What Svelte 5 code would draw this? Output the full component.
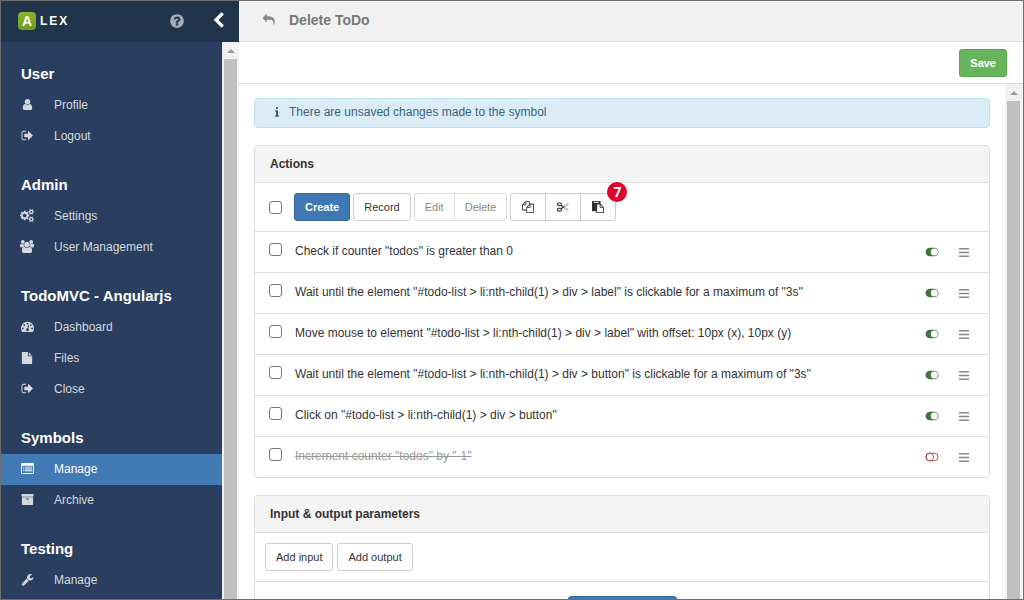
<script>
  const icons = {
    user: { w: 1792, d: 'M1536 1399q0 109-62.5 187t-150.5 78h-854q-88 0-150.5-78t-62.5-187q0-85 8.5-160.5t31.5-152 58.5-131 94-89 134.5-34.5q131 128 313 128t313-128q76 0 134.5 34.5t94 89 58.5 131 31.5 152 8.5 160.5zm-256-887q0 159-112.5 271.5t-271.5 112.5-271.5-112.5-112.5-271.5 112.5-271.5 271.5-112.5 271.5 112.5 112.5 271.5z' },
    signOut: { w: 1792, d: 'M704 1440q0 4 1 20t.5 26.5-3 23.5-10 19.5-20.5 6.5h-320q-119 0-203.5-84.5t-84.5-203.5v-704q0-119 84.5-203.5t203.5-84.5h320q13 0 22.5 9.5t9.5 22.5q0 4 1 20t.5 26.5-3 23.5-10 19.5-20.5 6.5h-320q-66 0-113 47t-47 113v704q0 66 47 113t113 47h312l11.5 1 11.5 3 8 5.5 7 9 2 13.5zm928-544q0 26-19 45l-544 544q-19 19-45 19t-45-19-19-45v-288h-448q-26 0-45-19t-19-45v-384q0-26 19-45t45-19h448v-288q0-26 19-45t45-19 45 19l544 544q19 19 19 45z' },
    cogs: { w: 1920, d: 'M896 896q0-106-75-181t-181-75-181 75-75 181 75 181 181 75 181-75 75-181zm768 512q0-52-38-90t-90-38-90 38-38 90q0 53 37.5 90.5t90.5 37.5 90.5-37.5 37.5-90.5zm0-1024q0-52-38-90t-90-38-90 38-38 90q0 53 37.5 90.5t90.5 37.5 90.5-37.5 37.5-90.5zm-384 421v185q0 10-7 19.5t-16 10.5l-155 24q-11 35-32 76 34 48 90 115 7 11 7 20 0 12-7 19-23 30-82.5 89.5t-78.5 59.5q-11 0-21-7l-115-90q-37 19-77 31-11 108-23 155-7 24-30 24h-186q-11 0-20-7.5t-10-17.5l-23-153q-34-10-75-31l-118 89q-7 7-20 7-11 0-21-8-144-133-144-160 0-9 7-19 10-14 41-53t47-61q-23-44-35-82l-152-24q-10-1-17-9.5t-7-19.5v-185q0-10 7-19.5t16-10.5l155-24q11-35 32-76-34-48-90-115-7-11-7-20 0-12 7-20 22-30 82-89t79-59q11 0 21 7l115 90q34-18 77-32 11-108 23-154 7-24 30-24h186q11 0 20 7.5t10 17.5l23 153q34 10 75 31l118-89q8-7 20-7 11 0 21 8 144 133 144 160 0 8-7 19-12 16-42 54t-45 60q23 48 34 82l152 23q10 2 17 10.5t7 19.5zm640 533v140q0 16-149 31-12 27-30 52 51 113 51 138 0 4-4 7-122 71-124 71-8 0-46-47t-52-68q-20 2-30 2t-30-2q-14 21-52 68t-46 47q-2 0-124-71-4-3-4-7 0-25 51-138-18-25-30-52-149-15-149-31v-140q0-16 149-31 13-29 30-52-51-113-51-138 0-4 4-7 4-2 35-20t59-34 30-16q8 0 46 46.5t52 67.5q20-2 30-2t30 2q51-71 92-112l6-2q4 0 124 70 4 3 4 7 0 25-51 138 17 23 30 52 149 15 149 31zm0-1024v140q0 16-149 31-12 27-30 52 51 113 51 138 0 4-4 7-122 71-124 71-8 0-46-47t-52-68q-20 2-30 2t-30-2q-14 21-52 68t-46 47q-2 0-124-71-4-3-4-7 0-25 51-138-18-25-30-52-149-15-149-31v-140q0-16 149-31 13-29 30-52-51-113-51-138 0-4 4-7 4-2 35-20t59-34 30-16q8 0 46 46.5t52 67.5q20-2 30-2t30 2q51-71 92-112l6-2q4 0 124 70 4 3 4 7 0 25-51 138 17 23 30 52 149 15 149 31z' },
    users: { w: 1920, d: 'M593 896q-162 5-265 128h-134q-82 0-138-40.5t-56-118.5q0-353 124-353 6 0 43.5 21t97.5 42.5 119 21.5q67 0 133-23-5 37-5 66 0 159 93 293zm1071 637q0 120-73 189.5t-194 69.5h-874q-121 0-194-69.5t-73-189.5q0-53 3.5-103.5t14-109 26.5-108.5 43-97.5 62-81 85.5-53.5 111.5-20q10 0 43 21.5t73 48 107 48 135 21.5 135-21.5 107-48 73-48 43-21.5q61 0 111.5 20t85.5 53.5 62 81 43 97.5 26.5 108.5 14 109 3.5 103.5zm-1024-1277q0 106-75 181t-181 75-181-75-75-181 75-181 181-75 181 75 75 181zm704 384q0 159-112.5 271.5t-271.5 112.5-271.5-112.5-112.5-271.5 112.5-271.5 271.5-112.5 271.5 112.5 112.5 271.5zm576 225q0 78-56 118.5t-138 40.5h-134q-103-123-265-128 93-134 93-293 0-29-5-66 66 23 133 23 59 0 119-21.5t97.5-42.5 43.5-21q124 0 124 353zm-128-609q0 106-75 181t-181 75-181-75-75-181 75-181 181-75 181 75 75 181z' },
    dashboard: { w: 1792, d: 'M384 1152q0-53-37.5-90.5t-90.5-37.5-90.5 37.5-37.5 90.5 37.5 90.5 90.5 37.5 90.5-37.5 37.5-90.5zm192-448q0-53-37.5-90.5t-90.5-37.5-90.5 37.5-37.5 90.5 37.5 90.5 90.5 37.5 90.5-37.5 37.5-90.5zm428 481l101-382q6-26-7.5-48.5t-38.5-29.5-48 6.5-30 39.5l-101 382q-60 5-107 43.5t-63 98.5q-20 77 20 146t117 89 146-20 89-117q16-60-6-117t-72-91zm660-33q0-53-37.5-90.5t-90.5-37.5-90.5 37.5-37.5 90.5 37.5 90.5 90.5 37.5 90.5-37.5 37.5-90.5zm-640-640q0-53-37.5-90.5t-90.5-37.5-90.5 37.5-37.5 90.5 37.5 90.5 90.5 37.5 90.5-37.5 37.5-90.5zm448 192q0-53-37.5-90.5t-90.5-37.5-90.5 37.5-37.5 90.5 37.5 90.5 90.5 37.5 90.5-37.5 37.5-90.5zm320 448q0 261-141 483-19 29-54 29h-1402q-35 0-54-29-141-221-141-483 0-182 71-348t191-286 286-191 348-71 348 71 286 191 191 286 71 348z' },
    file: { w: 1792, d: 'M1152 512v-472q22 14 36 28l408 408q14 14 28 36h-472zm-128 32q0 40 28 68t68 28h544v1056q0 40-28 68t-68 28h-1344q-40 0-68-28t-28-68v-1600q0-40 28-68t68-28h800v544z' },
    listAlt: { w: 1792, d: 'M160 128h1472q66 0 113 47t47 113v1216q0 66-47 113t-113 47h-1472q-66 0-113-47t-47-113v-1216q0-66 47-113t113-47zM128 544v928q0 32 32 32h1472q32 0 32-32v-928q0-32-32-32h-1472q-32 0-32 32zM256 640h128v128h-128zM256 896h128v128h-128zM256 1152h128v128h-128zM512 640h1024v128h-1024zM512 896h1024v128h-1024zM512 1152h1024v128h-1024z' },
    archive: { w: 1792, d: 'M128 128h1536q64 0 64 64v256q0 64-64 64h-1536q-64 0-64-64v-256q0-64 64-64zM192 576h1408q64 0 64 64v960q0 64-64 64h-1408q-64 0-64-64v-960q0-64 64-64zM768 768q-64 0-64 64t64 64h256q64 0 64-64t-64-64z' },
    wrench: { w: 1792, d: 'M448 1472q0-26-19-45t-45-19-45 19-19 45 19 45 45 19 45-19 19-45zm644-420l-682 682q-37 37-90 37-52 0-91-37l-106-108q-38-36-38-90 0-53 38-91l681-681q39 98 114.5 173.5t173.5 114.5zm634-435q0 39-23 106-47 134-164.5 217.5t-258.5 83.5q-185 0-316.5-131.5t-131.5-316.5 131.5-316.5 316.5-131.5q58 0 121.5 16.5t107.5 46.5q16 11 16 28t-16 28l-293 169v224l193 107q5-3 79-48.5t135.5-81 70.5-35.5q15 0 23.5 10t8.5 25z' },
    question: { w: 1792, d: 'M1024 1376v-192q0-14-9-23t-23-9h-192q-14 0-23 9t-9 23v192q0 14 9 23t23 9h192q14 0 23-9t9-23zm256-672q0-88-55.5-163t-138.5-116-170-41q-243 0-371 213-15 24 8 42l132 100q7 6 19 6 16 0 25-12 53-68 86-92 34-24 86-24 48 0 85.5 26t37.5 59q0 38-20 61t-68 45q-63 28-115.5 86.5t-52.5 125.5v36q0 14 9 23t23 9h192q14 0 23-9t9-23q0-19 21.5-49.5t54.5-49.5q32-18 49-28.5t46-35 44.5-48 28-60.5 12.5-81zm384 192q0 209-103 385.5t-279.5 279.5-385.5 103-385.5-103-279.5-279.5-103-385.5 103-385.5 279.5-279.5 385.5-103 385.5 103 279.5 279.5 103 385.5z' },
    chevron: { w: 1792, d: 'M1427 301l-531 531 531 531q19 19 19 45t-19 45l-166 166q-19 19-45 19t-45-19l-742-742q-19-19-19-45t19-45l742-742q19-19 45-19t45 19l166 166q19 19 19 45t-19 45z' },
    reply: { w: 1792, d: 'M1792 1120q0 166-127 451-3 7-10.5 24t-13.5 30-13 22q-12 17-28 17-15 0-23.5-10t-8.5-25q0-9 2.5-26.5t2.5-23.5q5-68 5-123 0-112-19.5-200.5t-54-153.5-89-112-117.5-77.5-148.5-44.5-167.5-21.5-193-5.5h-224v256q0 26-19 45t-45 19-45-19l-512-512q-19-19-19-45t19-45l512-512q19-19 45-19t45 19 19 45v256h224q713 0 875 403 53 134 53 333z' },
    info: { w: 640, d: 'M160 128h320v288h-320zM32 608h448v800h128v256h-576v-256h128v-544h-128z' },
    copy: { w: 1792, d: 'M1696 384q40 0 68 28t28 68v1216q0 40-28 68t-68 28h-960q-40 0-68-28t-28-68v-288h-544q-40 0-68-28t-28-68v-672q0-40 20-88t48-76l408-408q28-28 76-48t88-20h416q40 0 68 28t28 68v328q68-40 128-40h416zm-544 213l-299 299h299v-299zm-640-384l-299 299h299v-299zm196 647l316-316v-416h-384v416q0 40-28 68t-68 28h-416v640h512v-256q0-40 20-88t48-76zm956 804v-1152h-384v416q0 40-28 68t-68 28h-416v640h896z' },
    paste: { w: 1792, d: 'M768 1664h896v-640h-416q-40 0-68-28t-28-68v-416h-384v1152zm256-1440v-64q0-13-9.5-22.5t-22.5-9.5h-704q-13 0-22.5 9.5t-9.5 22.5v64q0 13 9.5 22.5t22.5 9.5h704q13 0 22.5-9.5t9.5-22.5zm256 672h299l-299-299v299zm512 128v672q0 40-28 68t-68 28h-960q-40 0-68-28t-28-68v-160h-544q-40 0-68-28t-28-68v-1344q0-40 28-68t68-28h1088q40 0 68 28t28 68v328q21 13 36 28l408 408q28 28 48 76t20 88z' }
  };

  const groups = [
    { title: 'User', items: [['Profile', 'user'], ['Logout', 'signOut']] },
    { title: 'Admin', items: [['Settings', 'cogs'], ['User Management', 'users']] },
    { title: 'TodoMVC - Angularjs', items: [['Dashboard', 'dashboard'], ['Files', 'file'], ['Close', 'signOut']] },
    { title: 'Symbols', items: [['Manage', 'listAlt', true], ['Archive', 'archive']] },
    { title: 'Testing', items: [['Manage', 'wrench']] }
  ];

  let actions = $state([
    { text: 'Check if counter "todos" is greater than 0', enabled: true },
    { text: 'Wait until the element "#todo-list > li:nth-child(1) > div > label" is clickable for a maximum of "3s"', enabled: true },
    { text: 'Move mouse to element "#todo-list > li:nth-child(1) > div > label" with offset: 10px (x), 10px (y)', enabled: true },
    { text: 'Wait until the element "#todo-list > li:nth-child(1) > div > button" is clickable for a maximum of "3s"', enabled: true },
    { text: 'Click on "#todo-list > li:nth-child(1) > div > button"', enabled: true },
    { text: 'Increment counter "todos" by "-1"', enabled: false }
  ]);
</script>

{#snippet icon(name, size = 12)}
  <svg class="icon" height={size} width={Math.round((size * icons[name].w) / 1792)} viewBox="0 0 {icons[name].w} 1792" aria-hidden="true">
    <path d={icons[name].d} fill="currentColor" fill-rule={name === 'listAlt' || name === 'archive' ? 'evenodd' : 'nonzero'} />
  </svg>
{/snippet}

{#snippet scrollbar()}
  <div class="scrollbar" aria-hidden="true">
    <span class="arrow"></span>
    <span class="thumb"></span>
  </div>
{/snippet}

<div class="app">
  <aside class="sidebar">
    <header class="brand">
      <span class="logo">A</span>
      <span class="name">LEX</span>
      <button class="plain help" aria-label="Help">{@render icon('question', 16)}</button>
      <button class="plain collapse" aria-label="Collapse sidebar">{@render icon('chevron', 17)}</button>
    </header>
    <div class="side-body">
      <nav>
        {#each groups as group}
          <section class="group">
            <h2>{group.title}</h2>
            {#each group.items as [label, glyph, active]}
              <a href="#top" class:active>
                <span class="nav-icon">{@render icon(glyph, glyph === 'file' ? 12 : 13)}</span>
                {label}
              </a>
            {/each}
          </section>
        {/each}
      </nav>
      {@render scrollbar()}
    </div>
  </aside>

  <main>
    <header class="title-bar">
      <button class="plain back" aria-label="Back">{@render icon('reply', 12)}</button>
      <h1>Delete ToDo</h1>
    </header>
    <div class="save-bar">
      <button class="btn success">Save</button>
    </div>
    <div class="view">
      <div class="content">
        <div class="alert" role="status">
          {@render icon('info', 12)}
          <span>There are unsaved changes made to the symbol</span>
        </div>

        <section class="panel">
          <h3>Actions</h3>
          <div class="tools">
            <input type="checkbox" aria-label="Select all actions" />
            <div class="buttons">
              <button class="btn primary">Create</button>
              <button class="btn">Record</button>
              <div class="joined">
                <button class="btn" disabled>Edit</button>
                <button class="btn" disabled>Delete</button>
              </div>
              <div class="joined glyphs">
                <button class="btn" aria-label="Copy">{@render icon('copy', 12)}</button>
                <button class="btn" aria-label="Cut">
                  <svg class="icon" width="12" height="12" viewBox="0 0 24 24" fill="none" stroke="currentColor" aria-hidden="true">
                    <ellipse cx="5" cy="6.5" rx="4" ry="3" stroke-width="2.4" />
                    <ellipse cx="5" cy="17.5" rx="4" ry="3" stroke-width="2.4" />
                    <path d="M8 8.5l5 3.5-5 3.5" stroke-width="2.6" />
                    <path d="M12 11l10-6 1.5 1.5L15 12l8.5 5.5L22 19l-10-6" stroke-width="1" opacity="0.7" />
                  </svg>
                </button>
                <button class="btn" aria-label="Paste">{@render icon('paste', 12)}</button>
                <span class="marker">7</span>
              </div>
            </div>
          </div>
          <ul>
            {#each actions as action, i}
              <li class:off={!action.enabled}>
                <input type="checkbox" id="action-{i}" />
                <label for="action-{i}">{action.text}</label>
                <button class="plain toggle" aria-label="Enable action" aria-pressed={action.enabled} onclick={() => (action.enabled = !action.enabled)}>
                  <svg class="icon" width="14" height="10" viewBox="0 0 14 10" aria-hidden="true">
                    {#if action.enabled}
                      <rect x="0.5" y="0.7" width="13" height="8.6" rx="4.3" fill="currentColor" />
                      <circle cx="9.3" cy="5" r="3.5" fill="#fff" />
                    {:else}
                      <rect x="1" y="1.2" width="12" height="7.6" rx="3.8" fill="none" stroke="currentColor" stroke-width="0.9" />
                      <circle cx="4.8" cy="5" r="3.8" fill="none" stroke="currentColor" stroke-width="0.9" />
                    {/if}
                  </svg>
                </button>
                <button class="plain drag" aria-label="Move action">
                  <svg class="icon" width="10" height="9" viewBox="0 0 10 9" aria-hidden="true">
                    <path d="M0 0h10v1.4H0zM0 3.800h10v1.400H0zM0 7.600h10V9H0z" fill="currentColor" />
                  </svg>
                </button>
              </li>
            {/each}
          </ul>
        </section>

        <section class="panel">
          <h3>Input &amp; output parameters</h3>
          <div class="tools params">
            <button class="btn">Add input</button>
            <button class="btn">Add output</button>
          </div>
          <div class="more">
            <button class="btn primary wide" aria-label="Add parameter"></button>
          </div>
        </section>
      </div>
      {@render scrollbar()}
    </div>
  </main>
</div>

<style>
  :global(body) {
    margin: 0;
    overflow: hidden;
  }

  .app,
  .app * {
    box-sizing: border-box;
  }

  .app {
    display: flex;
    height: 100vh;
    border: 1px solid #6f6d6f;
    background: #fff;
    color: #333;
    font: 12px/18px "Liberation Sans", Arial, sans-serif;
  }

  h1, h2, h3, ul {
    margin: 0;
    padding: 0;
  }

  .icon {
    display: block;
    flex: none;
  }

  .plain {
    display: flex;
    padding: 0;
    border: 0;
    background: none;
    color: inherit;
  }

  .sidebar {
    display: flex;
    flex: none;
    flex-direction: column;
    width: 238px;
    background: #2a3f5f;
    color: #fff;
  }

  .brand {
    display: flex;
    flex: none;
    align-items: center;
    height: 41px;
    padding: 0 12px 2px 17px;
    background: #20344c;
    font-weight: bold;
  }

  .logo {
    width: 18px;
    height: 18px;
    margin-right: 4px;
    border-radius: 4px;
    background: linear-gradient(#8db32c, #6f9c26);
    font-size: 14px;
    text-align: center;
  }

  .name {
    font-size: 12px;
    letter-spacing: 2px;
  }

  .help {
    margin-left: auto;
    color: #a3abb6;
  }

  .collapse {
    margin-left: 25px;
  }

  .side-body,
  .view {
    display: flex;
    flex: 1;
    min-height: 0;
  }

  .view {
    padding-right: 1px;
  }

  nav {
    display: flex;
    flex: 1;
    flex-direction: column;
    gap: 23px;
    padding-top: 22px;
    overflow: hidden;
  }

  .group {
    flex: none;
  }

  h2 {
    padding: 0 20px 6px;
    font-size: 15px;
    line-height: 20px;
  }

  nav a {
    display: flex;
    align-items: center;
    height: 31px;
    padding: 0 19px 2px;
    color: #d4d9df;
    text-decoration: none;
  }

  nav a.active {
    background: #427ab6;
    color: #fff;
  }

  .nav-icon {
    display: flex;
    justify-content: center;
    width: 14px;
    margin-right: 20px;
  }

  .scrollbar {
    display: flex;
    flex: none;
    flex-direction: column;
    width: 17px;
    padding: 0 2px;
    background: #f1f1f1;
  }

  .arrow {
    align-self: center;
    margin: 7px 0 6px;
    border: 4px solid transparent;
    border-top: 0;
    border-bottom-color: #999;
  }

  .thumb {
    flex: 1;
    background: #c1c1c1;
  }

  main {
    display: flex;
    flex: 1;
    flex-direction: column;
    min-width: 0;
  }

  .title-bar {
    display: flex;
    flex: none;
    align-items: center;
    height: 41px;
    padding: 0 24px 2px;
    border-bottom: 1px solid #ddd;
    background: #f1f1f1;
    color: #777;
  }

  .back {
    margin-right: 14px;
    color: #888;
  }

  h1 {
    font-size: 14px;
    line-height: 18px;
  }

  .save-bar {
    display: flex;
    flex: none;
    align-items: center;
    justify-content: flex-end;
    height: 42px;
    padding: 0 16px;
    border-bottom: 1px solid #ddd;
  }

  .btn {
    height: 28px;
    padding: 0 10px;
    border: 1px solid #ccc;
    border-radius: 3px;
    background: #fff;
    color: #333;
    font: 11px/16px "Liberation Sans", Arial, sans-serif;
  }

  .btn:disabled {
    border-color: #ddd;
    color: #888;
  }

  .primary {
    border-color: #35699f;
    background: #3f78b5;
    color: #fff;
    font-weight: bold;
  }

  .success {
    border-color: #56a650;
    background: #66b55d;
    color: #fff;
    font-weight: bold;
  }

  .content {
    display: flex;
    flex: 1;
    flex-direction: column;
    gap: 17px;
    min-width: 0;
    padding: 14px 15px 0;
    overflow: hidden;
  }

  .alert {
    display: flex;
    flex: none;
    align-items: center;
    gap: 10px;
    height: 30px;
    padding: 0 20px 2px;
    border: 1px solid #bce3ec;
    border-radius: 4px;
    background: #daecf6;
    color: #3c6480;
  }

  .panel {
    flex: none;
    border: 1px solid #ddd;
    border-radius: 4px;
  }

  h3 {
    padding: 9px 15px;
    border-bottom: 1px solid #ddd;
    border-radius: 3px 3px 0 0;
    background: #f4f4f4;
    font-size: 12px;
    line-height: 18px;
  }

  .tools {
    display: flex;
    align-items: center;
    gap: 12px;
    height: 49px;
    padding: 0 14px;
    border-bottom: 1px solid #ddd;
  }

  .params {
    gap: 4px;
    padding: 0 10px;
  }

  .buttons {
    display: flex;
    gap: 3px;
  }

  .joined {
    position: relative;
    display: flex;
  }

  .joined .btn + .btn {
    margin-left: -1px;
    border-radius: 0 3px 3px 0;
  }

  .joined .btn:first-child {
    border-radius: 3px 0 0 3px;
  }

  .glyphs .btn {
    display: flex;
    align-items: center;
    justify-content: center;
    width: 36px;
  }

  .glyphs .btn:nth-child(2) {
    border-radius: 0;
  }

  .marker {
    position: absolute;
    top: -11px;
    right: -11px;
    width: 20px;
    height: 20px;
    border-radius: 50%;
    background: #e0002b;
    color: #fff;
    font: bold 14px/20px "Open Sans", sans-serif;
    text-align: center;
  }

  input {
    flex: none;
    width: 13px;
    height: 13px;
    margin: 0;
    border: 1px solid #767676;
    border-radius: 3px;
    background: #fff;
    appearance: none;
  }

  input:checked {
    background: #3f78b5;
  }

  ul {
    list-style: none;
  }

  li {
    display: flex;
    align-items: center;
    height: 41px;
    padding: 0 20px 0 14px;
    border-bottom: 1px solid #ddd;
  }

  li:last-child {
    height: 40px;
    border-bottom: 0;
  }

  li input {
    margin-bottom: 5px;
  }

  label {
    flex: 1;
    padding: 0 0 2px 13px;
  }

  .off label {
    color: #999;
    text-decoration: line-through;
  }

  .toggle {
    margin-right: 20px;
    color: #3c763d;
  }

  .off .toggle {
    color: #a94442;
  }

  .drag {
    color: #888;
  }

  .more {
    display: flex;
    justify-content: center;
    padding: 14px;
  }

  .wide {
    width: 109px;
  }
</style>
